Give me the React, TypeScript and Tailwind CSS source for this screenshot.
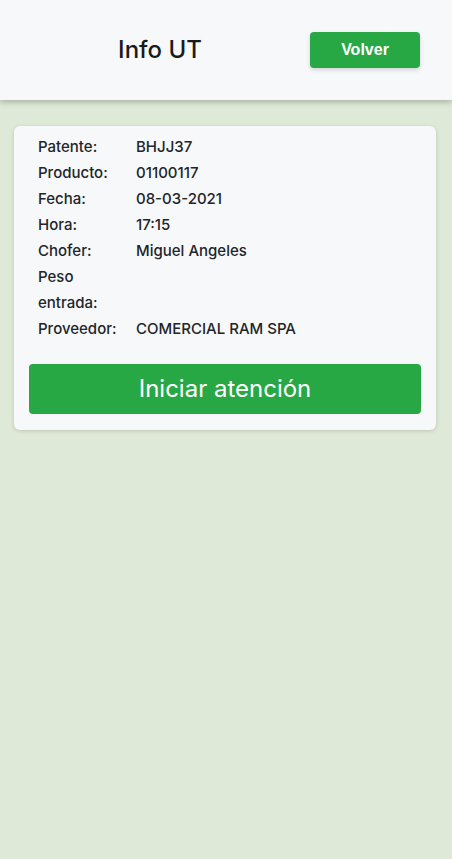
const rows: [string, string][] = [
  ["Patente:", "BHJJ37"],
  ["Producto:", "01100117"],
  ["Fecha:", "08-03-2021"],
  ["Hora:", "17:15"],
  ["Chofer:", "Miguel Angeles"],
  ["Peso entrada:", ""],
  ["Proveedor:", "COMERCIAL RAM SPA"],
];

export default function App() {
  return (
    <div className="min-h-[859px] bg-[#dfe9d7] font-['Inter',sans-serif] text-[#212529]">
      {/* header */}
      <header className="h-[100px] bg-[#f7f8fa] shadow-[0_2px_6px_rgba(0,0,0,0.25)] flex items-center">
        <h1 className="w-[310px] pl-[10px] text-center text-[24px] font-medium font-['Inter',sans-serif] text-[#1a1a1a]">
          Info UT
        </h1>
        <button className="w-[110px] h-[36px] rounded bg-[#28a745] text-white text-[16px] font-bold font-['Liberation_Sans',sans-serif] shadow-[0_2px_4px_rgba(0,0,0,0.15)]">
          Volver
        </button>
      </header>

      {/* info card */}
      <div className="ml-[14px] mr-[16px] mt-[26px] bg-[#f7f8fa] rounded-md shadow-[0_1px_4px_rgba(0,0,0,0.15)] px-[15px] pt-[8px] pb-[16px]">
        <table className="ml-[9px] text-[15px] leading-[26px] font-medium">
          <tbody>
            {rows.map(([label, value]) => (
              <tr key={label} className="align-top">
                <td className="w-[98px] pr-2">{label}</td>
                <td>{value}</td>
              </tr>
            ))}
          </tbody>
        </table>
        <button className="mt-[22px] w-full h-[50px] rounded bg-[#28a745] text-white text-[24px]">
          Iniciar atención
        </button>
      </div>
    </div>
  );
}
